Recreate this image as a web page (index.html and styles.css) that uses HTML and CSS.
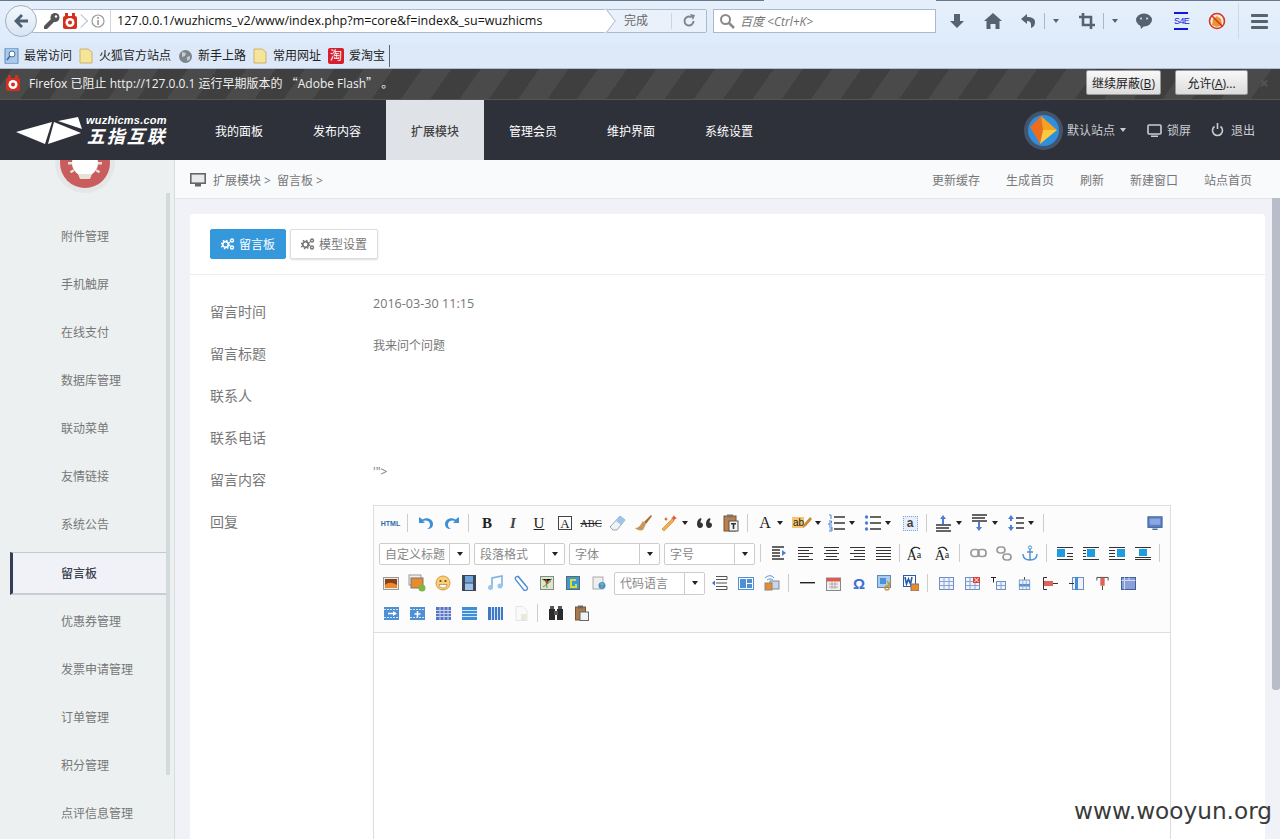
FILE: index.html
```html
<!DOCTYPE html>
<html>
<head>
  <title>wuzhicms</title>
  <meta charset="utf-8">
  <link rel="stylesheet" href="styles.css">
</head>
<body>
<div class="page">

  <!-- firefox toolbar -->
  <div class="ff-bar">
    <div class="ff-topline"></div>
    <div class="back-btn"><svg width="20" height="20" viewBox="0 0 20 20"><path d="M10 3L3 10l7 7 2-2-3.500-3.500H17v-3H8.500L12 5z" fill="#4c5f74"/></svg></div>
    <div class="url-box">
      <svg class="key" width="18" height="18" viewBox="0 0 18 18"><circle cx="12" cy="5.500" r="4.500" fill="#555"/><path d="M9 6l3 3-8 8H1v-3z" fill="#555"/><circle cx="13" cy="4.500" r="1.200" fill="#fff"/></svg>
      <svg class="block" width="14" height="16" viewBox="0 0 14 16"><rect x="2" y="0" width="3" height="4" fill="#d5301f"/><rect x="9" y="0" width="3" height="4" fill="#d5301f"/><rect y="3" width="14" height="13" rx="2" fill="#d5301f"/><circle cx="7" cy="9.500" r="4.500" fill="#fff"/><circle cx="7" cy="9.500" r="2" fill="#d5301f"/></svg>
      <span class="url-chev"></span>
      <svg class="info" width="14" height="14" viewBox="0 0 14 14"><circle cx="7" cy="7" r="6" fill="#fff" stroke="#999" stroke-width="1.200"/><rect x="6.200" y="6" width="1.600" height="5" fill="#999"/><rect x="6.200" y="3" width="1.600" height="1.800" fill="#999"/></svg>
      <span class="url-text">127.0.0.1/wuzhicms_v2/www/index.php?m=core&amp;f=index&amp;_su=wuzhicms</span>
      <span class="url-end">
        <span class="url-done">完成</span>
        <svg width="14" height="14" viewBox="0 0 14 14"><path d="M11.500 7A4.500 4.500 0 1 1 9.500 3.300" fill="none" stroke="#7b8794" stroke-width="2"/><path d="M8 0l5 1-2 5z" fill="#7b8794"/></svg>
      </span>
    </div>
    <div class="search-box">
      <svg width="16" height="16" viewBox="0 0 16 16"><circle cx="6.500" cy="6.500" r="4.500" fill="none" stroke="#8a8a8a" stroke-width="2"/><path d="M10 10l5 5" stroke="#8a8a8a" stroke-width="2.500"/></svg>
      <span>百度 &lt;Ctrl+K&gt;</span>
    </div>
    <div class="ff-icons">
      <svg class="fi-down" width="16" height="16" viewBox="0 0 16 16"><path d="M5 1h6v7h4l-7 7-7-7h4z" fill="#56636f"/></svg>
      <svg class="fi-home" width="18" height="16" viewBox="0 0 18 16"><path d="M9 0l9 8h-2.500v8h-4v-5h-5v5h-4V8H0z" fill="#56636f"/></svg>
      <svg class="fi-undo" width="16" height="16" viewBox="0 0 16 16"><path d="M7 1L1 6l6 5V8c3 0 4 1.500 4 4v3c3-1 4-3 4-6 0-3.500-3-5-8-5z" fill="#56636f"/></svg>
      <span class="fi-sep"></span>
      <span class="caret fi-caret"></span>
      <svg class="fi-crop" width="16" height="16" viewBox="0 0 16 16"><path d="M4 0v12h12M0 4h12v12" fill="none" stroke="#56636f" stroke-width="2.600"/></svg>
      <span class="fi-sep"></span>
      <span class="caret fi-caret"></span>
      <svg class="fi-chat" width="18" height="16" viewBox="0 0 18 16"><ellipse cx="9" cy="7" rx="8" ry="6.500" fill="#56636f"/><path d="M5 11l1 5 4-4z" fill="#56636f"/><circle cx="6" cy="5.500" r="1" fill="#dbe8f7"/><circle cx="12" cy="5.500" r="1" fill="#dbe8f7"/></svg>
      <span class="fi-s4e">S4E</span>
      <svg class="fi-noflash" width="18" height="18" viewBox="0 0 18 18"><circle cx="9" cy="9" r="7.500" fill="#f7ece0" stroke="#d4352a" stroke-width="1.600"/><path d="M5 7l4-3 4 3 1 6-5 2-5-2z" fill="#e9962f"/><path d="M3.500 3.500l11 11" stroke="#d4352a" stroke-width="1.600"/></svg>
      <span class="fi-sep tall"></span>
      <span class="fi-burger"><i></i><i></i><i></i></span>
    </div>
  </div>

  <!-- bookmarks -->
  <div class="bookmarks">
    <span class="bm"><svg width="15" height="16" viewBox="0 0 15 16"><rect x="1" y="0" width="13" height="16" rx="1" fill="#a9c8ea" stroke="#5d89bc"/><circle cx="8" cy="6" r="3" fill="#fff" stroke="#3c6ea5"/><path d="M6 8l-3 4" stroke="#3c6ea5" stroke-width="1.500"/></svg>最常访问</span>
    <span class="bm"><svg class="fold" width="14" height="16" viewBox="0 0 14 16"><path d="M1 1h8l4 3v11H1z" fill="#f6e49b" stroke="#c9b46a"/></svg>火狐官方站点</span>
    <span class="bm"><svg width="15" height="15" viewBox="0 0 15 15"><circle cx="7.500" cy="7.500" r="6.500" fill="#7d858c"/><path d="M4 3l4 1-1 3-3 1zM9 8l3-1 0 3-3 2z" fill="#c6ccd2"/></svg>新手上路</span>
    <span class="bm"><svg class="fold" width="14" height="16" viewBox="0 0 14 16"><path d="M1 1h8l4 3v11H1z" fill="#f6e49b" stroke="#c9b46a"/></svg>常用网址</span>
    <span class="bm"><span class="tao">淘</span>爱淘宝</span>
    <span class="bm-sep"></span>
  </div>

  <!-- plugin notice -->
  <div class="notice">
    <svg width="14" height="16" viewBox="0 0 14 16"><rect x="2" y="0" width="3" height="4" fill="#d5301f"/><rect x="9" y="0" width="3" height="4" fill="#d5301f"/><rect y="3" width="14" height="13" rx="2" fill="#d5301f"/><circle cx="7" cy="9.500" r="4.500" fill="#fff"/><circle cx="7" cy="9.500" r="2" fill="#d5301f"/></svg>
    <span class="notice-text">Firefox 已阻止 http://127.0.0.1 运行早期版本的 <span class="cjk">“</span>Adobe Flash<span class="cjk">”</span> 。</span>
    <button class="notice-btn first">继续屏蔽(<u>B</u>)</button>
    <button class="notice-btn second">允许(<u>A</u>)...</button>
    <span class="notice-x">×</span>
  </div>

  <!-- site header -->
  <div class="header">
    <div class="logo">
      <svg width="68" height="30" viewBox="0 0 68 30"><path d="M0 17L36 7 29 29zM38 7l27 11-33 11zM42 6l20-4 4 12z" fill="#fff"/></svg>
      <div class="logo-text">
        <span class="logo-en">wuzhicms.com</span>
        <span class="logo-cn">五指互联</span>
      </div>
    </div>
    <div class="nav">
      <a>我的面板</a>
      <a>发布内容</a>
      <a class="on">扩展模块</a>
      <a>管理会员</a>
      <a>维护界面</a>
      <a>系统设置</a>
    </div>
    <div class="head-right">
      <span class="site-pic"><svg width="31" height="31" viewBox="0 0 31 31"><circle cx="15.500" cy="15.500" r="15.500" fill="#2d8fe0"/><path d="M2 12L13 1l2 14-3 14z" fill="#ee6c1e"/><path d="M13 1l16 14H15z" fill="#f7a11f"/><path d="M15 15h14L12 29z" fill="#fbc93c"/></svg></span>
      <span class="site-name">默认站点</span><span class="caret light"></span>
      <svg class="lock-ic" width="15" height="13" viewBox="0 0 15 13"><rect x="1" y="1" width="13" height="9" rx="1" fill="none" stroke="#c9ccd1" stroke-width="1.600"/><rect x="4" y="11.500" width="7" height="1.500" fill="#c9ccd1"/></svg>
      <span class="head-link">锁屏</span>
      <svg class="off-ic" width="13" height="14" viewBox="0 0 13 14"><path d="M3.500 3.500a5 5 0 1 0 6 0" fill="none" stroke="#c9ccd1" stroke-width="1.600"/><path d="M6.500 0v6" stroke="#c9ccd1" stroke-width="1.600"/></svg>
      <span class="head-link">退出</span>
    </div>
  </div>

  <div class="body-wrap">
    <!-- left menu -->
    <div class="side">
      <div class="side-logo">
        <svg width="64" height="34" viewBox="0 0 64 34"><circle cx="32" cy="3" r="30" fill="#e3e7e8"/><circle cx="32" cy="3" r="25" fill="#c95c5c"/><circle cx="32" cy="3" r="13" fill="#fff"/><path d="M25 14h14l-2 5h-10z" fill="#e6e3d5"/><rect x="15" y="2" width="4" height="2.500" fill="#e6e3d5"/><rect x="45" y="2" width="4" height="2.500" fill="#e6e3d5"/><rect x="17" y="10" width="4" height="2.500" fill="#e6e3d5" transform="rotate(-30 19 11)"/><rect x="43" y="10" width="4" height="2.500" fill="#e6e3d5" transform="rotate(30 45 11)"/></svg>
      </div>
      <a class="side-item">附件管理</a>
      <a class="side-item">手机触屏</a>
      <a class="side-item">在线支付</a>
      <a class="side-item">数据库管理</a>
      <a class="side-item">联动菜单</a>
      <a class="side-item">友情链接</a>
      <a class="side-item">系统公告</a>
      <a class="side-item on">留言板</a>
      <a class="side-item">优惠券管理</a>
      <a class="side-item">发票申请管理</a>
      <a class="side-item">订单管理</a>
      <a class="side-item">积分管理</a>
      <a class="side-item">点评信息管理</a>
      <span class="side-thumb"></span>
    </div>

    <div class="main">
      <div class="crumb">
        <svg width="16" height="14" viewBox="0 0 16 14"><rect x="0.800" y="0.800" width="14.400" height="9.400" fill="#e9eaee" stroke="#666" stroke-width="1.600"/><rect x="5" y="11" width="6" height="2.500" fill="#666"/></svg>
        <span class="crumb-path">扩展模块 &gt;</span>
        <span class="crumb-path next">留言板 &gt;</span>
        <div class="crumb-links">
          <a>更新缓存</a><a>生成首页</a><a>刷新</a><a>新建窗口</a><a>站点首页</a>
        </div>
      </div>

      <div class="card">
        <div class="tabs">
          <a class="tab on"><svg class="gears on-g" width="14" height="12" viewBox="0 0 14 12"><circle cx="4.500" cy="6.500" r="2.800" fill="none" stroke-width="1.800"/><circle cx="4.500" cy="6.500" r="4.200" fill="none" stroke-width="1.400" stroke-dasharray="1.500 1.800"/><circle cx="11" cy="2.500" r="1.500" fill="none" stroke-width="1.400"/><circle cx="11" cy="9.500" r="1.500" fill="none" stroke-width="1.400"/></svg>留言板</a>
          <a class="tab"><svg class="gears" width="14" height="12" viewBox="0 0 14 12"><circle cx="4.500" cy="6.500" r="2.800" fill="none" stroke-width="1.800"/><circle cx="4.500" cy="6.500" r="4.200" fill="none" stroke-width="1.400" stroke-dasharray="1.500 1.800"/><circle cx="11" cy="2.500" r="1.500" fill="none" stroke-width="1.400"/><circle cx="11" cy="9.500" r="1.500" fill="none" stroke-width="1.400"/></svg>模型设置</a>
        </div>

        <div class="form">
          <label>留言时间</label><div class="val date">2016-03-30 11:15</div>
          <label>留言标题</label><div class="val">我来问个问题</div>
          <label>联系人</label><div class="val"></div>
          <label>联系电话</label><div class="val"></div>
          <label>留言内容</label><div class="val">'"&gt;</div>
          <label>回复</label>
          <div class="editor">
            <div class="tb">
              <div class="tb-row">
                <span class="b first-b"><span class="t-html">HTML</span></span>
                <span class="s"></span>
                <span class="b"><svg width="18" height="18" viewBox="0 0 18 18"><path d="M2 3v6h6L6 7c3-1.500 7 0 7 3.500 0 2-1 3.500-3 4.500 4 0 6-2 6-5 0-5-6-7.500-10.500-4.500z" fill="#3f8fd8"/></svg></span>
                <span class="b"><svg width="18" height="18" viewBox="0 0 18 18"><path d="M16 3v6h-6l2-2C9 5.500 5 7 5 10.500c0 2 1 3.500 3 4.500-4 0-6-2-6-5 0-5 6-7.500 10.500-4.500z" fill="#3f8fd8"/></svg></span>
                <span class="s"></span>
                <span class="b t-b">B</span>
                <span class="b t-i">I</span>
                <span class="b t-u">U</span>
                <span class="b"><span class="t-box">A</span></span>
                <span class="b t-abc">ABC</span>
                <span class="b"><svg width="18" height="18" viewBox="0 0 18 18"><path d="M12 2l5 4-8 10H5l-3-3z" fill="#eef3f8" stroke="#9aa7b5"/><path d="M12 2l5 4-4 5-5-4z" fill="#9fc4ea"/></svg></span>
                <span class="b"><svg width="18" height="18" viewBox="0 0 18 18"><path d="M17 1l-7 7 2 2 6-8z" fill="#a8692c"/><path d="M9 7l3 3-3 6c-3 1-6 0-8-2 3 0 5-2 6-4z" fill="#c9975a"/></svg></span>
                <span class="b drop wand"><svg width="18" height="18" viewBox="0 0 18 18"><path d="M3 17l-2-2L11 5l2 2z" fill="#f3b04b" stroke="#c27a25" stroke-width=".6"/><path d="M13 1l1 2 2 1-2 1-1 2-1-2-2-1 2-1zM5 3l.800 1.500L7 5l-1.200.800L5 7l-.800-1.200L3 5l1.200-.500z" fill="#e05b2b"/></svg><i class="caret"></i></span>
                <span class="b"><svg width="16" height="12" viewBox="0 0 16 12"><path d="M4 1C1.500 1.500 0 4 0 7c0 2 1 4 3 4s3-1.500 3-3-1-2.500-2.500-2.500c0-1.500.500-2.500 1-3zM13 1c-2.500.500-4 3-4 6 0 2 1 4 3 4s3-1.500 3-3-1-2.500-2.500-2.500c0-1.500.500-2.500 1-3z" fill="#333"/></svg></span>
                <span class="b"><svg width="16" height="18" viewBox="0 0 16 18"><rect x="1" y="2" width="12" height="15" fill="#b97f4f" stroke="#7d5230"/><rect x="4" y="0.500" width="6" height="3" fill="#777"/><rect x="6" y="7" width="9" height="10" fill="#f4f4f4" stroke="#555"/><path d="M8 9h5v1.500h-1.700V15H9.700v-4.500H8z" fill="#333"/></svg></span>
                <span class="s"></span>
                <span class="b drop"><span class="t-a">A</span><i class="caret"></i></span>
                <span class="b drop"><svg width="20" height="16" viewBox="0 0 20 16"><rect x="0" y="2" width="12" height="11" fill="#f6c66e"/><text x="1" y="11" class="svg-ab">ab</text><path d="M11 13l1-4 6-7 2 2-6 7z" fill="#c98a3a"/></svg><i class="caret"></i></span>
                <span class="b drop"><svg width="18" height="18" viewBox="0 0 18 18"><path d="M6 3h11M6 9h11M6 15h11" stroke="#333" stroke-width="1.300"/><path d="M1 1h2v4M1 7h2.500v2H1v2h3M1 13h3v4H1M1.500 15H4" fill="none" stroke="#4a7fd6" stroke-width="1"/></svg><i class="caret"></i></span>
                <span class="b drop"><svg width="18" height="18" viewBox="0 0 18 18"><path d="M6 3h11M6 9h11M6 15h11" stroke="#333" stroke-width="1.300"/><circle cx="2.500" cy="3" r="1.700" fill="#4a7fd6"/><circle cx="2.500" cy="9" r="1.700" fill="#4a7fd6"/><circle cx="2.500" cy="15" r="1.700" fill="#4a7fd6"/></svg><i class="caret"></i></span>
                <span class="b"><span class="t-dash">a</span></span>
                <span class="s"></span>
                <span class="b drop"><svg width="18" height="18" viewBox="0 0 18 18"><path d="M8 1l3 4H9v5H7V5H5z" fill="#4a7fd6"/><path d="M1 11h15M1 14h13M1 17h15" stroke="#333" stroke-width="1.300"/></svg><i class="caret"></i></span>
                <span class="b drop"><svg width="18" height="18" viewBox="0 0 18 18"><path d="M1 1h15M1 4h13M1 7h15" stroke="#333" stroke-width="1.300"/><path d="M8 17l3-4H9V8H7v5H5z" fill="#4a7fd6"/></svg><i class="caret"></i></span>
                <span class="b drop"><svg width="18" height="18" viewBox="0 0 18 18"><path d="M4 1l3 4H5v2H3V5H1zM4 17l3-4H5v-2H3v2H1z" fill="#4a7fd6"/><path d="M9 4h8M9 9h8M9 14h8" stroke="#333" stroke-width="1.300"/></svg><i class="caret"></i></span>
                <span class="s"></span>
                <span class="b right-b"><svg width="16" height="16" viewBox="0 0 18 18"><rect x="1" y="2" width="16" height="12" fill="#5b7fc2" stroke="#3f5f9c"/><rect x="3" y="4" width="12" height="7" fill="#88a8e0"/><path d="M6 16h6" stroke="#3f5f9c" stroke-width="1.500"/></svg></span>
              </div>

              <div class="tb-row">
                <span class="sel">自定义标题<i><b class="caret"></b></i></span>
                <span class="sel">段落格式<i><b class="caret"></b></i></span>
                <span class="sel">字体<i><b class="caret"></b></i></span>
                <span class="sel">字号<i><b class="caret"></b></i></span>
                <span class="s"></span>
                <span class="b"><svg width="16" height="14" viewBox="0 0 16 14"><path d="M1 1h12M1 4h8M1 7h8M1 10h8M1 13h12" stroke="#333" stroke-width="1.300"/><path d="M11 4l4 3-4 3z" fill="#4a7fd6"/></svg></span>
                <span class="b"><svg class="al" viewBox="0 0 15 13"><path d="M0 .5h15M0 3.500h11M0 6.500h15M0 9.500h11M0 12.500h15" stroke="#333"/></svg></span>
                <span class="b"><svg class="al" viewBox="0 0 15 13"><path d="M0 .5h15M2 3.500h11M0 6.500h15M2 9.500h11M0 12.500h15" stroke="#333"/></svg></span>
                <span class="b"><svg class="al" viewBox="0 0 15 13"><path d="M0 .5h15M4 3.500h11M0 6.500h15M4 9.500h11M0 12.500h15" stroke="#333"/></svg></span>
                <span class="b"><svg class="al" viewBox="0 0 15 13"><path d="M0 .5h15M0 3.500h15M0 6.500h15M0 9.500h15M0 12.500h15" stroke="#333"/></svg></span>
                <span class="s aa-sep"></span>
                <span class="b aa"><span class="t-aa">A<small>a</small></span><svg class="aa-arrow" width="12" height="6" viewBox="0 0 12 6"><path d="M2 6c1-4 6-5 9-2" fill="none" stroke="#222" stroke-width="1.200"/></svg></span>
                <span class="b aa"><span class="t-aa">A<small>a</small></span><svg class="aa-arrow" width="12" height="6" viewBox="0 0 12 6"><path d="M1 4c3-3 8-2 9 2" fill="none" stroke="#222" stroke-width="1.200"/></svg></span>
                <span class="s"></span>
                <span class="b"><svg width="17" height="10" viewBox="0 0 17 10"><rect x="1" y="1.500" width="8" height="7" rx="3" fill="none" stroke="#999" stroke-width="1.700"/><rect x="8" y="1.500" width="8" height="7" rx="3" fill="none" stroke="#999" stroke-width="1.700"/></svg></span>
                <span class="b"><svg width="16" height="15" viewBox="0 0 16 15"><rect x="1" y="1" width="8" height="6" rx="3" fill="none" stroke="#999" stroke-width="1.700"/><rect x="7" y="8" width="8" height="6" rx="3" fill="none" stroke="#999" stroke-width="1.700"/></svg></span>
                <span class="b"><svg width="16" height="16" viewBox="0 0 16 16"><circle cx="8" cy="2.500" r="1.600" fill="none" stroke="#4f8fd4"/><path d="M8 4v11M5 7h6M1 9c0 4 3 6 7 6s7-2 7-6" fill="none" stroke="#4f8fd4" stroke-width="1.400"/></svg></span>
                <span class="s"></span>
                <span class="b"><svg class="wrap" viewBox="0 0 16 13"><path d="M0 .5h16M0 12.500h16M10 6.500h6M10 9.500h6" stroke="#333"/><rect y="2" width="8" height="8" fill="#1f9be0"/></svg></span>
                <span class="b"><svg class="wrap" viewBox="0 0 16 13"><path d="M0 .5h16M0 3.500h3M0 6.500h3M0 9.500h3M0 12.500h16" stroke="#333"/><rect x="4" y="2" width="8" height="8" fill="#1f9be0"/></svg></span>
                <span class="b"><svg class="wrap" viewBox="0 0 16 13"><path d="M0 .5h16M0 3.500h6M0 6.500h6M0 9.500h6M0 12.500h16" stroke="#333"/><rect x="8" y="2" width="8" height="8" fill="#1f9be0"/></svg></span>
                <span class="b"><svg class="wrap" viewBox="0 0 16 13"><path d="M0 .5h16M0 10.500h16M0 12.500h16" stroke="#333"/><rect x="4" y="2" width="8" height="7" fill="#1f9be0"/></svg></span>
                <span class="s"></span>
              </div>

              <div class="tb-row shift">
                <span class="b"><svg class="pic" viewBox="0 0 16 13"><rect x=".5" y=".5" width="15" height="12" fill="#e9e9e9" stroke="#999"/><rect x="2" y="2" width="12" height="9" fill="#8a3f16"/><path d="M2 8c3-3 7-3 12 0v3H2z" fill="#e98a2b"/></svg></span>
                <span class="b"><svg width="18" height="18" viewBox="0 0 18 18"><rect x="1" y="1" width="12" height="10" fill="#eee" stroke="#999"/><rect x="3" y="4" width="12" height="10" fill="#e98a2b" stroke="#777"/><circle cx="14" cy="14" r="3.500" fill="#7db73f"/></svg></span>
                <span class="b"><svg width="16" height="16" viewBox="0 0 16 16"><circle cx="8" cy="8" r="7" fill="#f8cf7a" stroke="#d89b3a"/><circle cx="5.500" cy="6" r="1.100" fill="#7a4a10"/><circle cx="10.500" cy="6" r="1.100" fill="#7a4a10"/><path d="M4 9.500h8c-.500 2.500-2 3.500-4 3.500s-3.500-1-4-3.500z" fill="#fff" stroke="#a5692a" stroke-width=".6"/></svg></span>
                <span class="b"><svg width="14" height="16" viewBox="0 0 14 16"><rect width="14" height="16" fill="#3f4654"/><rect x="3" y="1" width="8" height="6.500" fill="#6fa5df"/><rect x="3" y="8.500" width="8" height="6.500" fill="#9dc3ec"/></svg></span>
                <span class="b"><svg width="16" height="16" viewBox="0 0 16 16"><path d="M5 12V3l10-2v10" fill="none" stroke="#7fb0e4" stroke-width="1.600"/><circle cx="3.500" cy="12.500" r="2.500" fill="#9cc5ee"/><circle cx="13" cy="11" r="2.500" fill="#9cc5ee"/></svg></span>
                <span class="b"><svg width="16" height="16" viewBox="0 0 16 16"><path d="M5 1l9 11a2 2 0 0 1-3.500 2.500L2.500 4.500A2 2 0 0 1 5.500 2l7.500 9" fill="none" stroke="#4f8fd4" stroke-width="1.300"/></svg></span>
                <span class="b"><svg width="14" height="14" viewBox="0 0 14 14"><rect x=".5" y=".5" width="13" height="13" fill="#dfe6c9" stroke="#888"/><path d="M2 3l5 3 5-3M6 3l1 9M3 11l8-6" stroke="#4c9a4c"/><circle cx="7" cy="6" r="1.600" fill="#d33"/></svg></span>
                <span class="b"><svg width="14" height="14" viewBox="0 0 14 14"><rect x=".5" y=".5" width="13" height="13" fill="#2f9de0" stroke="#666"/><path d="M4 3h6v2H6v5h3V8h2v4H4z" fill="#e6d72a"/></svg></span>
                <span class="b"><svg width="14" height="14" viewBox="0 0 14 14"><rect x="1" y="1" width="10" height="12" fill="#eee" stroke="#aaa"/><circle cx="10" cy="9.500" r="3.500" fill="#3f8fd8"/><path d="M8 8h4M10 7v5" stroke="#8fc06a"/></svg></span>
                <span class="sel code">代码语言<i><b class="caret"></b></i></span>
                <span class="b"><svg width="16" height="14" viewBox="0 0 16 14"><path d="M4 .5h11v3H4M4 10.500h11v3H4M4 7h11" fill="none" stroke="#555"/><path d="M0 7l3-2.500v5z" fill="#3f6fd0"/></svg></span>
                <span class="b"><svg width="16" height="13" viewBox="0 0 16 13"><rect x=".5" y=".5" width="15" height="12" fill="#fff" stroke="#4f8fd4"/><rect x="2" y="2" width="6" height="9" fill="#4f8fd4"/><rect x="9" y="2" width="5" height="4" fill="#4f8fd4"/><rect x="9" y="7" width="5" height="4" fill="#4f8fd4"/></svg></span>
                <span class="b"><svg width="16" height="16" viewBox="0 0 16 16"><path d="M1 3c3-3 7-3 9 0M3 5c2-1.500 4-1.500 6 0" fill="none" stroke="#4f8fd4"/><rect x="6" y="6" width="9" height="8" fill="#c9d6e8" stroke="#888"/><rect x="1" y="8" width="7" height="7" fill="#e98a2b" stroke="#888"/></svg></span>
                <span class="s"></span>
                <span class="b"><svg width="15" height="2" viewBox="0 0 15 2"><rect width="15" height="1.400" fill="#222"/></svg></span>
                <span class="b"><svg width="15" height="15" viewBox="0 0 15 15"><rect x=".5" y="2" width="14" height="12.500" fill="#f0f0f0" stroke="#888"/><rect x="1" y="2" width="13" height="3.500" fill="#e0584e"/><path d="M3 8h9M3 11h9M6 6v7M9 6v7" stroke="#aaa"/></svg></span>
                <span class="b t-omega">Ω</span>
                <span class="b"><svg width="16" height="17" viewBox="0 0 16 17"><rect x=".5" y=".5" width="13" height="12" fill="#a9cdf0" stroke="#5d89bc"/><rect x="3" y="3" width="6" height="6" fill="#4f8fd4"/><circle cx="10" cy="13" r="2" fill="none" stroke="#c9973d" stroke-width="1.400"/><path d="M14 6l-4 6M10 6l3 5" stroke="#c9973d" stroke-width="1.400"/></svg></span>
                <span class="b"><svg width="16" height="16" viewBox="0 0 16 16"><rect x=".5" y=".5" width="12" height="11" fill="#fff" stroke="#2a5aa8"/><path d="M2 2l1.500 7L5.500 4l2 5L9 2" fill="none" stroke="#2a5aa8" stroke-width="1.600"/><rect x="8" y="9" width="8" height="7" fill="#e98a2b" stroke="#777"/></svg></span>
                <span class="s"></span>
                <span class="b"><svg class="tbl" viewBox="0 0 15 13"><rect x=".5" y=".5" width="14" height="12" fill="#eef3fb" stroke="#6f8fc4"/><path d="M.5 4.500h14M.5 8.500h14M5 .5v12M10 .5v12" stroke="#8aa4d0"/></svg></span>
                <span class="b"><svg class="tbl" viewBox="0 0 15 13"><rect x=".5" y=".5" width="14" height="12" fill="#eef3fb" stroke="#6f8fc4"/><path d="M.5 4.500h14M.5 8.500h14M5 .5v12M10 .5v12" stroke="#8aa4d0"/><rect x="8" y="0" width="7" height="6" fill="#e0403a"/><path d="M9.500 1l4 4M13.500 1l-4 4" stroke="#fff"/></svg></span>
                <span class="b"><svg class="tbl" viewBox="0 0 15 13"><path d="M0 .5h5M2.500 .5v5" stroke="#222"/><rect x="5.500" y="4.500" width="9" height="8" fill="#eef3fb" stroke="#6f8fc4"/><path d="M5.500 8.500h9M10 4.500v8" stroke="#8aa4d0"/></svg></span>
                <span class="b"><svg class="tbl" viewBox="0 0 15 15"><path d="M7.500 0v4" stroke="#333"/><rect x="1.500" y="3.500" width="12" height="11" fill="#eef3fb" stroke="#6f8fc4"/><rect x="1.500" y="8" width="12" height="3" fill="#4f8fd4"/><path d="M5.500 3.500v11M9.500 3.500v11" stroke="#8aa4d0"/></svg></span>
                <span class="b"><svg class="tbl" viewBox="0 0 15 13"><path d="M4 .5H.5v12H4" fill="none" stroke="#333"/><rect x="1" y="4" width="9" height="5" fill="#e0605a"/><path d="M10 6.500h5" stroke="#333"/></svg></span>
                <span class="b"><svg class="tbl" viewBox="0 0 15 13"><rect x="3.500" y=".5" width="11" height="12" fill="#eef3fb" stroke="#6f8fc4"/><rect x="6" y="0" width="3" height="13" fill="#3f8fd8"/><path d="M0 6.500h5" stroke="#333"/></svg></span>
                <span class="b"><svg class="tbl" viewBox="0 0 15 15"><path d="M1 4V.5h13V4" fill="none" stroke="#333"/><rect x="5" y="1" width="5" height="9" fill="#e0605a"/><path d="M7.500 10v5" stroke="#333"/></svg></span>
                <span class="b"><svg class="tbl" viewBox="0 0 15 13"><rect x=".5" y=".5" width="14" height="12" fill="#8a9fd8" stroke="#3f5f9c"/><path d="M.5 3.500h14M3.500 .5v3M8 .5v3M3.500 .5v12" stroke="#cfd9ef"/></svg></span>
              </div>

              <div class="tb-row shift">
                <span class="b"><svg class="tbl" viewBox="0 0 15 13"><rect width="15" height="13" fill="#4f8fd4"/><path d="M0 2.500h15M0 10.500h15" stroke="#d5e4f5" stroke-dasharray="2 1"/><path d="M4 6.500h6" stroke="#fff" stroke-width="1.500"/><path d="M9 4l4 2.500L9 9z" fill="#fff"/></svg></span>
                <span class="b"><svg class="tbl" viewBox="0 0 15 13"><rect width="15" height="13" fill="#4f8fd4"/><path d="M0 2.500h15M0 10.500h15" stroke="#d5e4f5" stroke-dasharray="2 1"/><path d="M7.500 4v6M4.500 7h6" stroke="#fff" stroke-width="1.500"/></svg></span>
                <span class="b"><svg class="tbl" viewBox="0 0 15 13"><rect width="15" height="13" fill="#5a74c4"/><path d="M0 3.500h15M0 6.500h15M0 9.500h15M4 0v13M8 0v13M12 0v13" stroke="#c8d4f0"/></svg></span>
                <span class="b"><svg class="tbl" viewBox="0 0 15 13"><rect width="15" height="13" fill="#3f8fd8"/><path d="M0 3.500h15M0 6.500h15M0 9.500h15" stroke="#d5e4f5"/></svg></span>
                <span class="b"><svg class="tbl" viewBox="0 0 15 13"><rect width="15" height="13" fill="#3f78c8"/><path d="M3.500 0v13M6.500 0v13M9.500 0v13M12.500 0v13" stroke="#d5e4f5"/></svg></span>
                <span class="b"><svg width="13" height="15" viewBox="0 0 13 15"><path d="M1 .5h7l4 4V14.500H1z" fill="#fafafa" stroke="#e4e4e4"/><rect x="6" y="8" width="5" height="6" fill="#e4ecd8"/></svg></span>
                <span class="s"></span>
                <span class="b"><svg width="16" height="15" viewBox="0 0 16 15"><rect x="1" y="3" width="6" height="11" fill="#2b2b2b"/><rect x="9" y="3" width="6" height="11" fill="#2b2b2b"/><rect x="6" y="5" width="4" height="4" fill="#555"/><rect x="2" y="0" width="4" height="3" fill="#555"/><rect x="10" y="0" width="4" height="3" fill="#555"/></svg></span>
                <span class="b"><svg width="14" height="16" viewBox="0 0 14 16"><rect x="0.500" y="2" width="10" height="13" fill="#a87a50" stroke="#7d5230"/><rect x="3" y="0.500" width="5" height="3" fill="#666"/><rect x="5" y="7" width="8.500" height="8.500" fill="#f2f2f2" stroke="#666"/></svg></span>
              </div>
            </div>
            <div class="edit-area"></div>
          </div>
        </div>
      </div>
      <span class="main-thumb"></span>
    </div>
  </div>

  <span class="mark">www.wooyun.org</span>
</div>
</body>
</html>
```

FILE: styles.css
```css
* {
  box-sizing: border-box;
}

html, body {
  margin: 0;
  height: 100%;
  overflow: hidden;
}

body {
  font-family: "Open Sans", "Noto Sans CJK SC", sans-serif;
  font-size: 12px;
  color: #777;
}

.page {
  position: relative;
  width: 1280px;
  height: 839px;
  display: flex;
  flex-direction: column;
  overflow: hidden;
}

svg {
  display: block;
  flex: none;
}

.caret {
  display: block;
  flex: none;
  width: 0;
  height: 0;
  border-left: 3.5px solid transparent;
  border-right: 3.5px solid transparent;
  border-top: 4px solid #222;
}

/* firefox toolbar */
.ff-bar {
  position: relative;
  height: 44px;
  flex: none;
  display: flex;
  align-items: center;
  padding: 0 0 2px 5px;
  background: linear-gradient(#e6f0fb, #deebf9);
}

.ff-topline {
  position: absolute;
  top: 0;
  left: 0;
  right: 0;
  height: 1px;
  background: linear-gradient(to right, #66788c 764px, transparent 764px, transparent 936px, #66788c 936px);
}

.back-btn {
  position: relative;
  z-index: 1;
  width: 32px;
  height: 32px;
  flex: none;
  border-radius: 50%;
  border: 1px solid #9fb0c4;
  background: linear-gradient(#f4f8fd, #d9e5f3);
  display: flex;
  align-items: center;
  justify-content: center;
}

.url-box {
  width: 675px;
  height: 24px;
  margin-left: -5px;
  flex: none;
  display: flex;
  align-items: center;
  background: #fff;
  border: 1px solid #aab9cc;
  border-radius: 0 2px 2px 0;
}

.url-box .key {
  margin-left: 10px;
}

.url-box .block {
  margin-left: 2px;
}

.url-chev {
  width: 10px;
  height: 10px;
  margin: 0 0 0 -1px;
  transform: rotate(45deg);
  border-top: 1px solid #b5c2d2;
  border-right: 1px solid #b5c2d2;
}

.url-box .info {
  margin-left: 5px;
}

.url-text {
  margin-left: 5px;
  padding-left: 6px;
  border-left: 1px solid #ccd6e2;
  width: 496px;
  font-size: 12.5px;
  line-height: 22px;
  color: #111;
  white-space: nowrap;
}

.url-end {
  position: relative;
  flex: 1;
  height: 22px;
  display: flex;
  align-items: center;
  background: #eaf1fa;
  padding-left: 18px;
  gap: 10px;
}

/* arrow where the address ends */
.url-end::before {
  content: "";
  position: absolute;
  left: -8px;
  top: 3px;
  width: 15px;
  height: 15px;
  transform: rotate(45deg) skew(8deg, 8deg);
  background: #fff;
  border-top: 1px solid #b5c2d2;
  border-right: 1px solid #b5c2d2;
}

.url-done {
  color: #666;
  width: 48px;
  line-height: 16px;
  border-right: 1px solid #ccd6e2;
}

.search-box {
  width: 223px;
  height: 24px;
  margin-left: 6px;
  flex: none;
  display: flex;
  align-items: center;
  gap: 5px;
  padding-left: 5px;
  background: #fff;
  border: 1px solid #aab9cc;
  color: #777;
  font-style: italic;
}

.ff-icons {
  flex: 1;
  display: flex;
  align-items: center;
  padding-left: 13px;
}

.fi-home { margin-left: 19px; }
.fi-undo { margin-left: 18px; }
.fi-crop { margin-left: 20px; }
.fi-chat { margin-left: 17px; }
.fi-s4e { margin-left: 21px; }
.fi-noflash { margin-left: 20px; }

.fi-sep {
  width: 1px;
  height: 16px;
  margin-left: 8px;
  background: #a9b6c5;
}

.fi-sep.tall {
  height: 36px;
  margin-left: 12px;
  background: #ccd9e8;
}

.fi-caret {
  margin-left: 8px;
  border-top-color: #56636f;
}

.fi-s4e {
  width: 14px;
  height: 18px;
  border-top: 2px solid #1515e0;
  border-bottom: 2px solid #1515e0;
  color: #1515e0;
  font-size: 9px;
  line-height: 14px;
  font-family: "Liberation Sans", sans-serif;
  text-align: center;
  white-space: nowrap;
  letter-spacing: -0.6px;
}

.fi-burger {
  margin-left: 12px;
  width: 17px;
  display: flex;
  flex-direction: column;
  gap: 3px;
}

.fi-burger i {
  display: block;
  height: 3px;
  border-radius: 1px;
  background: #56636f;
}

/* bookmarks */
.bookmarks {
  height: 24px;
  flex: none;
  display: flex;
  align-items: center;
  padding-left: 4px;
  background: #dde9f8;
  color: #222;
}

.bm {
  display: flex;
  align-items: center;
  gap: 5px;
  margin-right: 7px;
  line-height: 18px;
}

.bm .fold {
  margin-right: 1px;
}

.tao {
  width: 16px;
  height: 16px;
  border-radius: 2px;
  background: #d81e2c;
  color: #fff;
  font-size: 12px;
  line-height: 16px;
  text-align: center;
}

.bm-sep {
  width: 1px;
  height: 22px;
  margin-left: -3px;
  background: #666;
}

/* notice bar */
.notice {
  height: 32px;
  flex: none;
  display: flex;
  align-items: center;
  padding: 0 0 3px 6px;
  border-top: 1px solid #aebccb;
  border-bottom: 1px solid #555;
  color: #f0f0f0;
  background: repeating-linear-gradient(-55deg, #3f3f3f 0, #3f3f3f 24px, #4a4a4a 24px, #4a4a4a 48px);
}

.notice-text {
  margin-left: 9px;
  flex: 1;
}

.cjk {
  font-family: "Noto Sans CJK SC", sans-serif;
}

.notice-btn {
  height: 25px;
  padding: 0;
  border: 1px solid #999;
  border-radius: 2px;
  background: linear-gradient(#f8f8f8, #dcdcdc);
  color: #222;
  font: 12px "Open Sans", "Noto Sans CJK SC", sans-serif;
}

.notice-btn.first { width: 75px; }
.notice-btn.second { width: 73px; margin-left: 14px; }

.notice-x {
  width: 32px;
  text-align: center;
  color: #555;
  font-size: 16px;
  font-weight: bold;
}

/* header */
.header {
  height: 60px;
  flex: none;
  display: flex;
  background: #2e313a;
}

.logo {
  width: 190px;
  flex: none;
  display: flex;
  align-items: center;
  padding: 0 0 0 16px;
}

.logo-text {
  display: flex;
  flex-direction: column;
  align-items: flex-end;
  margin-left: 2px;
  color: #fff;
  font-style: italic;
  font-weight: bold;
  line-height: 1;
}

.logo-en {
  font-family: "Liberation Sans", sans-serif;
  font-size: 11px;
  line-height: 11px;
  letter-spacing: 0.2px;
}

.logo-cn {
  font-size: 18px;
  line-height: 20px;
  letter-spacing: 2px;
}

.nav {
  display: flex;
}

.nav a {
  width: 98px;
  text-align: center;
  line-height: 64px;
  color: #fff;
}

.nav a.on {
  background: #dfe3e8;
  color: #444;
  font-weight: 500;
}

.head-right {
  flex: 1;
  display: flex;
  align-items: center;
  justify-content: flex-end;
  padding-right: 25px;
  color: #c9ccd1;
}

.site-pic {
  width: 39px;
  height: 39px;
  flex: none;
  margin-right: 4px;
  display: flex;
  align-items: center;
  justify-content: center;
  border-radius: 50%;
  background: #44546a;
}

.caret.light {
  margin-left: 5px;
  border-top-color: #c9ccd1;
}

.lock-ic { margin-left: 21px; margin-right: 5px; }
.off-ic { margin-left: 20px; margin-right: 7px; }

/* left menu */
.body-wrap {
  flex: 1;
  display: flex;
  min-height: 0;
}

.side {
  position: relative;
  width: 175px;
  flex: none;
  overflow: hidden;
  background: #ecf0f1;
  border-right: 1px solid #d7dcdf;
}

.side-logo {
  height: 52px;
  padding-left: 53px;
}

.side-item {
  display: block;
  height: 48px;
  width: 166px;
  padding-left: 61px;
  line-height: 50px;
  color: #777;
}

.side-item.on {
  height: 43px;
  margin: 4px 0 2px 10px;
  width: 156px;
  padding-left: 48px;
  line-height: 41px;
  border-left: 3px solid #343f55;
  border-top: 1px solid #c3c8ce;
  border-bottom: 2px solid #c9ced4;
  background: #f0f2f7;
  color: #3c4250;
  font-weight: 500;
}

.side-thumb {
  position: absolute;
  left: 166px;
  top: 33px;
  width: 4px;
  height: 582px;
  background: #d3dada;
}

/* main area */
.main {
  position: relative;
  flex: 1;
  min-width: 0;
  background: #f0f2f7;
  padding: 0 15px 0 15px;
}

.crumb {
  display: flex;
  align-items: center;
  height: 39px;
  margin: 0 -15px;
  padding: 1px 28px 0 15px;
  background: #f9fafc;
  border-bottom: 1px solid #e4e6ec;
}

.crumb-path {
  margin-left: 7px;
  width: 57px;
  white-space: nowrap;
}

.crumb-path.next {
  width: auto;
}

.crumb-links {
  margin-left: auto;
  display: flex;
  gap: 26px;
}

.card {
  height: 640px;
  margin-top: 15px;
  background: #fff;
  border-radius: 3px 3px 0 0;
}

.tabs {
  height: 61px;
  padding: 15px 20px;
  display: flex;
  gap: 4px;
  border-bottom: 1px solid #eee;
}

.tab {
  height: 30px;
  display: flex;
  align-items: center;
  justify-content: center;
  gap: 4px;
  width: 88px;
  border: 1px solid #ddd;
  border-radius: 2px;
  box-shadow: 0 1px 2px #ddd;
  background: #fff;
  color: #777;
}

.tab.on {
  width: 76px;
  border-color: #3498db;
  box-shadow: none;
  background: #3498db;
  color: #fff;
}

.gears { stroke: #777; }
.gears.on-g { stroke: #fff; }

.form {
  display: grid;
  grid-template-columns: 163px 798px;
  grid-auto-rows: 42px;
  padding: 16px 0 0 20px;
}

.form label {
  font-size: 14px;
  line-height: 42px;
  color: #777;
}

.val {
  padding-top: 1px;
  line-height: 24px;
  color: #777;
}

.val.date {
  font-size: 12.6px;
}

/* editor */
.editor {
  height: 400px;
  margin-top: 4px;
  border: 1px solid #ddd;
  border-bottom: 0;
}

.tb {
  height: 127px;
  padding-top: 2px;
  background: #fcfcfc;
  border-bottom: 1px solid #ddd;
}

.tb-row {
  height: 30px;
  display: flex;
  align-items: center;
  padding-left: 3px;
}

.tb-row.shift {
  padding-left: 4px;
}

.b {
  width: 26px;
  height: 30px;
  flex: none;
  display: flex;
  align-items: center;
  justify-content: center;
  font-family: "Liberation Serif", serif;
  color: #222;
}

.b.first-b { width: 27px; }
.b.right-b { margin-left: auto; margin-right: 2px; }

.b.drop {
  width: 36px;
  justify-content: flex-start;
  padding-left: 3px;
  gap: 3px;
}

.b.drop.wand {
  width: 34px;
  margin-left: 2px;
}

.s {
  width: 1px;
  height: 18px;
  margin: 0 5px 0 3px;
  flex: none;
  background: #ccc;
}

.s.aa-sep {
  margin-right: 0;
}

.b.aa {
  position: relative;
  width: 28px;
}

.aa-arrow {
  position: absolute;
  top: 7px;
  left: 9px;
}

.t-html {
  font: bold 7px "Liberation Sans", sans-serif;
  color: #2f6da8;
}

.t-b { font-weight: bold; font-size: 15px; }
.t-i { font-style: italic; font-weight: bold; font-size: 15px; color: #444; }
.t-u { text-decoration: underline; font-size: 15px; }
.t-abc { text-decoration: line-through; font-size: 10.5px; }
.t-a { width: 18px; text-align: center; font-size: 16px; }
.t-aa { font-size: 14px; line-height: 14px; padding-top: 6px; }
.t-aa small { font-size: 10px; position: relative; top: -2px; }
.t-omega { color: #3f6fd0; font-family: "Liberation Sans", sans-serif; font-size: 15px; font-weight: bold; }

.t-box {
  width: 14px;
  height: 14px;
  border: 1px solid #444;
  font-size: 13px;
  line-height: 13px;
  text-align: center;
}

.t-dash {
  width: 15px;
  height: 15px;
  border: 1px dotted #7fa4d8;
  background: #e8eff9;
  font: bold 12px/13px "Liberation Sans", sans-serif;
  text-align: center;
  color: #444;
}

.svg-ab {
  font: 10px "Liberation Sans", sans-serif;
  fill: #222;
}

.al { width: 15px; height: 13px; }
.wrap { width: 16px; height: 13px; }
.pic { width: 16px; height: 13px; }
.tbl { width: 15px; height: 13px; overflow: visible; }

.sel {
  width: 91px;
  height: 22px;
  flex: none;
  margin: 1px 2px 0;
  padding-left: 5px;
  display: flex;
  justify-content: space-between;
  border: 1px solid #ccc;
  border-radius: 2px;
  background: #fff;
  line-height: 21px;
  color: #888;
  white-space: nowrap;
}

.sel i {
  width: 20px;
  flex: none;
  display: flex;
  align-items: center;
  justify-content: center;
  border-left: 1px solid #ccc;
  font-style: normal;
}

.sel.code {
  height: 23px;
  margin: 0 2px;
}

.edit-area {
  height: 272px;
  background: #fff;
}

.main-thumb {
  position: absolute;
  top: 38px;
  right: 0;
  width: 8px;
  height: 492px;
  border-radius: 0 0 3px 3px;
  background: #b9bdc9;
}

.mark {
  position: absolute;
  left: 1074px;
  top: 797px;
  font-family: "DejaVu Sans", sans-serif;
  font-size: 23.2px;
  line-height: 28px;
  color: #3a3a3a;
}
```
